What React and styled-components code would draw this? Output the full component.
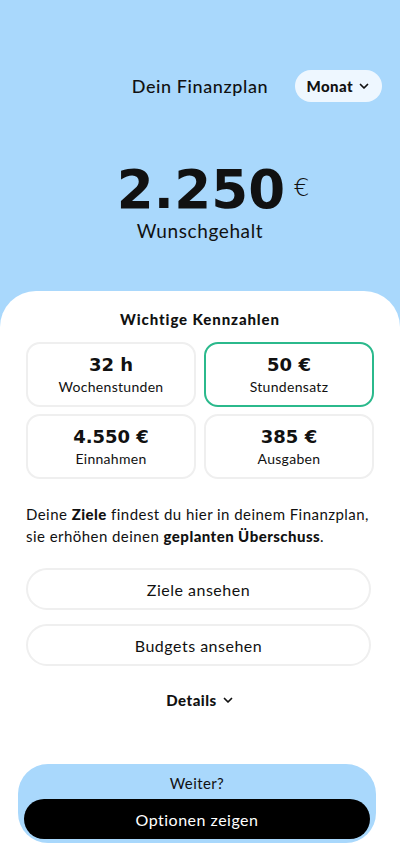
import styled, { createGlobalStyle } from 'styled-components'

const Global = createGlobalStyle`
  * { box-sizing: border-box; }
  body {
    margin: 0;
    background: #a9d8fc;
    font-family: 'Lato', 'Noto Sans', sans-serif;
    color: #111;
  }
`

const Screen = styled.div`
  width: 400px;
  min-height: 867px;
  display: flex;
  flex-direction: column;
  background: #a9d8fc;
`

const Header = styled.header`
  display: grid;
  grid-template-columns: 1fr auto 1fr;
  align-items: center;
  padding: 70px 18px 0 18px;
`

const Title = styled.h1`
  grid-column: 2;
  margin: 0;
  font-family: 'Lato', sans-serif;
  font-weight: 500;
  font-size: 18px;
  letter-spacing: 0.6px;
`

const Pill = styled.button`
  grid-column: 3;
  justify-self: end;
  height: 32px;
  padding: 0 12px;
  display: flex;
  align-items: center;
  gap: 5px;
  border: none;
  border-radius: 16px;
  background: #eef7ff;
  font-family: 'Lato', sans-serif;
  font-weight: 900;
  font-size: 15px;
  letter-spacing: 0.4px;
  color: #111;
`

const Hero = styled.div`
  display: flex;
  flex-direction: column;
  align-items: center;
  padding-top: 62px;
  height: 189px;
`

const Amount = styled.div`
  display: flex;
  align-items: flex-start;
  gap: 8px;
  margin-left: 26px;
`

const Big = styled.span`
  font-family: 'DejaVu Sans', sans-serif;
  font-weight: 700;
  font-size: 53px;
  line-height: 52px;
  letter-spacing: 0.2px;
`

const Currency = styled.span`
  font-family: 'DejaVu Sans', sans-serif;
  font-weight: 300;
  font-size: 25px;
  margin-top: 9px;
`

const Caption = styled.div`
  font-size: 19px;
  letter-spacing: 0.6px;
  margin-top: 3px;
`

const Sheet = styled.main`
  flex: 1;
  background: #fff;
  border-radius: 36px 36px 0 0;
  padding: 19px 26px 24px;
  display: flex;
  flex-direction: column;
`

const SectionTitle = styled.h2`
  margin: 0 0 14px;
  text-align: center;
  font-size: 15px;
  font-weight: 900;
  letter-spacing: 0.9px;
`

const Grid = styled.div`
  display: grid;
  grid-template-columns: 1fr 1fr;
  gap: 7px 8px;
`

const Card = styled.div`
  height: 65px;
  border-radius: 14px;
  border: 2px solid ${({ $active }) => ($active ? '#2bb98c' : '#efefef')};
  display: flex;
  flex-direction: column;
  align-items: center;
  justify-content: center;
`

const CardValue = styled.div`
  font-family: 'DejaVu Sans', sans-serif;
  font-weight: 700;
  font-size: 18px;
  line-height: 22px;
`

const CardLabel = styled.div`
  font-size: 14px;
  margin-top: 2px;
  letter-spacing: 0.3px;
`

const Text = styled.p`
  margin: 24px 0 21px;
  font-size: 15px;
  line-height: 22px;
  letter-spacing: 0.45px;
  b { font-weight: 900; }
`

const Outline = styled.button`
  height: 42px;
  width: calc(100% - 3px);
  border-radius: 21px;
  border: 2px solid #efefef;
  background: #fff;
  font-family: 'Lato', sans-serif;
  font-size: 16px;
  color: #111;
  letter-spacing: 0.5px;
  & + & { margin-top: 14px; }
`

const DetailsToggle = styled.button`
  align-self: center;
  margin-top: 24px;
  display: flex;
  align-items: center;
  gap: 5px;
  border: none;
  background: none;
  font-family: 'Lato', sans-serif;
  font-weight: 900;
  font-size: 15px;
  letter-spacing: 0.5px;
  color: #111;
`

const Footer = styled.div`
  margin: 54px -2px 0 -8px;
  background: #a9d8fc;
  border-radius: 30px;
  padding: 10px 6px 4px;
  display: flex;
  flex-direction: column;
  align-items: center;
`

const FooterLabel = styled.div`
  font-size: 15px;
  letter-spacing: 0.4px;
  margin-bottom: 7px;
`

const Primary = styled.button`
  width: 100%;
  height: 40px;
  border: none;
  border-radius: 20px;
  background: #000;
  color: #fff;
  font-family: 'Lato', sans-serif;
  font-size: 16px;
  letter-spacing: 0.5px;
`

const Chevron = () => (
  <svg width="12" height="12" viewBox="0 0 24 24" fill="none" stroke="currentColor" strokeWidth="3.5" strokeLinecap="round" strokeLinejoin="round">
    <path d="M5 9l7 7 7-7" />
  </svg>
)

const kennzahlen = [
  { value: '32 h', label: 'Wochenstunden' },
  { value: '50 €', label: 'Stundensatz', active: true },
  { value: '4.550 €', label: 'Einnahmen' },
  { value: '385 €', label: 'Ausgaben' },
]

export default function App() {
  return (
    <Screen>
      <Global />
      <Header>
        <Title>Dein Finanzplan</Title>
        <Pill>
          Monat <Chevron />
        </Pill>
      </Header>

      <Hero>
        <Amount>
          <Big>2.250</Big>
          <Currency>€</Currency>
        </Amount>
        <Caption>Wunschgehalt</Caption>
      </Hero>

      <Sheet>
        <SectionTitle>Wichtige Kennzahlen</SectionTitle>
        <Grid>
          {kennzahlen.map((k) => (
            <Card key={k.label} $active={k.active}>
              <CardValue>{k.value}</CardValue>
              <CardLabel>{k.label}</CardLabel>
            </Card>
          ))}
        </Grid>

        <Text>
          Deine <b>Ziele</b> findest du hier in deinem Finanzplan,
          <br />
          sie erhöhen deinen <b>geplanten Überschuss</b>.
        </Text>

        <Outline>Ziele ansehen</Outline>
        <Outline>Budgets ansehen</Outline>

        <DetailsToggle>
          Details <Chevron />
        </DetailsToggle>

        <Footer>
          <FooterLabel>Weiter?</FooterLabel>
          <Primary>Optionen zeigen</Primary>
        </Footer>
      </Sheet>
    </Screen>
  )
}
